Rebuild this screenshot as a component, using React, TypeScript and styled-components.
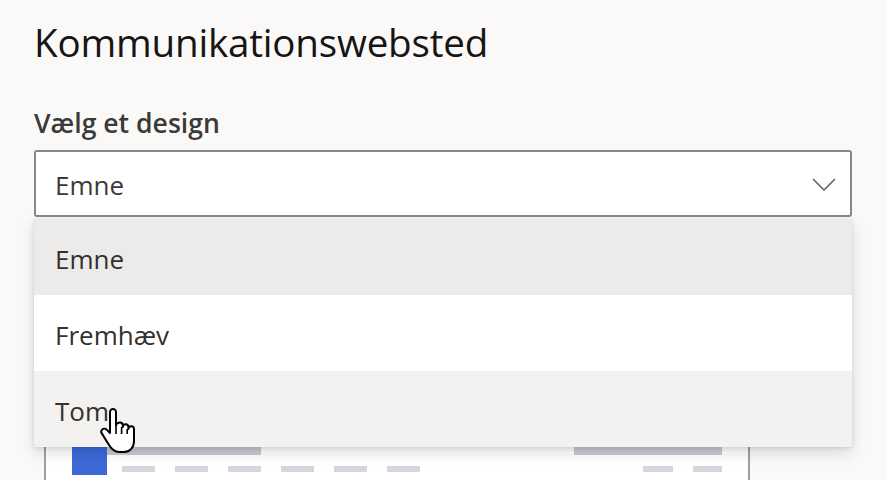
import React from 'react';
import styled, {createGlobalStyle} from "styled-components";

const GlobalStyle = createGlobalStyle`
  html, body {
    margin: 0;
    padding: 0;
    background: #faf9f8;
    font-family: "Open Sans", "Noto Sans", sans-serif;
    color: #323130;
  }
  body {
    height: 480px;
    overflow: hidden;
  }
`

const Page = styled.div`
  padding: 14px 35px 0 34px;
`

const Title = styled.h1`
  margin: 0;
  font-size: 38.6px;
  line-height: 57px;
  font-weight: 400;
  color: #161514;
  letter-spacing: -0.2px;
`

const Label = styled.label`
  display: block;
  margin-top: 34px;
  font-size: 26.6px;
  line-height: 36px;
  font-weight: 600;
  color: #3b3a39;
`

const Field = styled.div`
  position: relative;
  margin-top: 9px;
`

const SelectBox = styled.div`
  box-sizing: border-box;
  height: 67px;
  display: flex;
  align-items: center;
  justify-content: space-between;
  padding: 2px 14px 0 19px;
  background: #fff;
  border: 2px solid #8a8886;
  border-radius: 3px;
  font-size: 26px;
  color: #3b3a39;
`

const Menu = styled.ul`
  position: absolute;
  top: 69px;
  left: 0;
  right: 0;
  margin: 0;
  padding: 0;
  list-style: none;
  background: #fff;
  box-shadow: 0 6px 14px rgba(0, 0, 0, 0.13), 0 1px 4px rgba(0, 0, 0, 0.1);
  z-index: 2;
`

const Option = styled.li<{ $bg: string }>`
  position: relative;
  box-sizing: border-box;
  height: 76px;
  display: flex;
  align-items: center;
  padding: 4px 21px 0;
  background: ${p => p.$bg};
  font-size: 26px;
  color: #323130;
`

const Cursor = styled.svg`
  position: absolute;
  left: 66px;
  top: 37px;
  width: 36px;
  height: 46px;
  z-index: 3;
`

const Preview = styled.div`
  box-sizing: border-box;
  width: 706px;
  height: 260px;
  margin: 23px 0 0 10px;
  padding: 207px 26px 0;
  background: #fff;
  border-left: 2px solid #a19f9d;
  border-right: 2px solid #a19f9d;
  display: flex;
  justify-content: space-between;
`

const Group = styled.div`
  display: flex;
  align-items: flex-start;
`

const Logo = styled.div`
  width: 35px;
  height: 28px;
  background: #3d69d8;
`

const Column = styled.div<{ $end?: boolean }>`
  display: flex;
  flex-direction: column;
  align-items: ${p => (p.$end ? 'flex-end' : 'flex-start')};
`

const Bar = styled.div<{ $w: number }>`
  width: ${p => p.$w}px;
  height: 8px;
  background: #c6c9cf;
`

const Dashes = styled.div<{ $indent?: number }>`
  display: flex;
  gap: 20px;
  margin-top: 11px;
  padding-left: ${p => p.$indent || 0}px;
`

const Dash = styled.div<{ $w?: number }>`
  width: ${p => p.$w || 33}px;
  height: 6px;
  background: #d3d6dc;
`

function Chevron() {
    return (
        <svg width="24" height="13" viewBox="0 0 24 13">
            <polyline points="1,1 12,12 23,1" fill="none" stroke="#605e5c" strokeWidth="1.5"/>
        </svg>
    )
}

function HandCursor() {
    return (
        <Cursor viewBox="0 0 18 23">
            <path
                d="M6.5 0.5c-.8 0-1.5.7-1.5 1.5V12.5L3.3 10.8c-.6-.6-1.6-.6-2.2 0-.5.5-.6 1.3-.2 1.9L4.5 18.5c1 1.6 2.5 3.5 5 3.5H12c3 0 5-2.4 5-5.5V10.5c0-.8-.6-1.4-1.4-1.4s-1.4.6-1.4 1.4V9.5c0-.8-.6-1.4-1.4-1.4s-1.4.6-1.4 1.4V8.7c0-.8-.6-1.4-1.4-1.4S8 7.9 8 8.7V2c0-.8-.7-1.5-1.5-1.5z"
                fill="#fff" stroke="#000" strokeWidth="1" strokeLinejoin="round"/>
            <path d="M8 8.7V13M10.8 9.5V13M13.6 10.5V13" fill="none" stroke="#000" strokeWidth="0.8"/>
        </Cursor>
    )
}

const options = [
    {label: 'Emne', bg: '#edebe9'},
    {label: 'Fremhæv', bg: '#ffffff'},
    {label: 'Tom', bg: '#f3f2f1', hover: true},
]

function App() {
    return (
        <>
            <GlobalStyle/>
            <Page>
                <Title>Kommunikationswebsted</Title>
                <Label>Vælg et design</Label>
                <Field>
                    <SelectBox>
                        <span>Emne</span>
                        <Chevron/>
                    </SelectBox>
                    <Menu>
                        {options.map(o => (
                            <Option key={o.label} $bg={o.bg}>
                                {o.label}
                                {o.hover && <HandCursor/>}
                            </Option>
                        ))}
                    </Menu>
                </Field>
                <Preview>
                    <Group>
                        <Logo/>
                        <Column>
                            <Bar $w={154}/>
                            <Dashes $indent={15}>
                                {[0, 1, 2, 3, 4, 5].map(i => <Dash key={i}/>)}
                            </Dashes>
                        </Column>
                    </Group>
                    <Column $end>
                        <Bar $w={148}/>
                        <Dashes>
                            <Dash $w={30}/>
                            <Dash $w={29}/>
                        </Dashes>
                    </Column>
                </Preview>
            </Page>
        </>
    );
}

export default App;
